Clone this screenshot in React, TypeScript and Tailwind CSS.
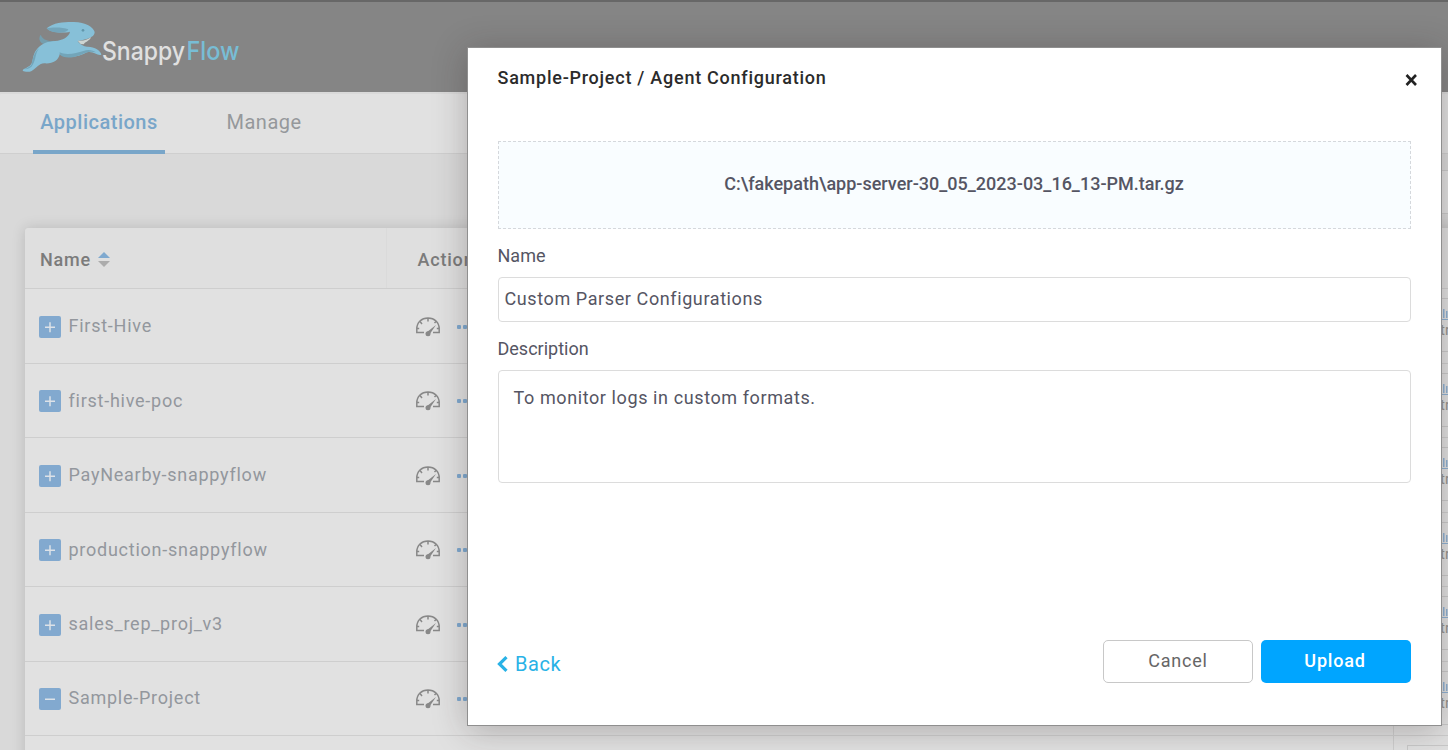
import React from "react";

const projects = [
  { name: "First-Hive", open: false },
  { name: "first-hive-poc", open: false },
  { name: "PayNearby-snappyflow", open: false },
  { name: "production-snappyflow", open: false },
  { name: "sales_rep_proj_v3", open: false },
  { name: "Sample-Project", open: true },
];

function Logo() {
  return (
    <svg width="240" height="60" viewBox="0 0 240 60" role="img" aria-label="SnappyFlow">
      <g transform="translate(-6 -5) scale(.3333)">
        <path d="M84 86C73 80 70 70 77 59C83 74 98 80 118 77L112 90Z" fill="#749eae" />
        <path d="M95 40C115 23 145 21 170 21C210 19 235 36 239 51C239 64 225 72 188 78C194 88 208 95 216 95C237 94 258 107 259 119C248 124 236 107 216 112C195 125 160 133 134 118C131 137 112 147 88 145C72 145 65 160 50 168C42 172 29 171 23 167C24 160 44 158 50 145C55 131 54 115 68 100C82 83 100 80 120 78C143 76 162 66 165 50C145 55 108 54 95 40Z" fill="#87c0d8" />
        <path d="M95 40C115 36 145 37 160 43C158 50 148 52 132 53C115 53 102 49 95 40Z" fill="#74a5ba" />
        <path d="M134 112C155 122 185 114 205 108C222 102 235 107 243 112C225 107 212 112 196 120C170 130 145 131 134 118Z" fill="#73a5b9" />
        <path d="M188 77C205 79 215 75 229 66C224 78 210 80 206 88L197 87Z" fill="#ced5d2" />
        <path d="M50 148C54 128 58 112 72 100C61 115 63 132 54 148C50 158 40 163 28 163C38 158 46 156 50 148Z" fill="#73a5b9" />
        <circle cx="204" cy="46" r="4" fill="#6297ac" />
      </g>
      <text x="81" y="39.800" fontFamily="Inter, sans-serif" fontSize="25.500" fontWeight="500" fill="#e0e0e0" textLength="83" lengthAdjust="spacingAndGlyphs">Snappy</text>
      <text x="165.500" y="39.800" fontFamily="Inter, sans-serif" fontSize="25.500" fontWeight="500" fill="#78bdd5" textLength="53" lengthAdjust="spacingAndGlyphs">Flow</text>
    </svg>
  );
}

function Gauge() {
  return (
    <svg width="24" height="20" viewBox="0 0 24 20" fill="none" stroke="#888" strokeWidth="1.5">
      <path d="M8 15.500H.8V12C.8 5.500 5.500 1 12 1S23.200 5.500 23.200 12V15.500H17M12 1V4.500M4 4.500L6 7M20 4.500L18.500 6M1 11.500H3.200M20.800 11.500H23" />
      <path d="M20 8L11 15L13.500 17.500Z" fill="#888" stroke="none" />
      <circle cx="12" cy="16.700" r="2.500" fill="#888" stroke="none" />
    </svg>
  );
}

function Toggle({ open }: { open: boolean }) {
  return (
    <svg width="22" height="22" viewBox="0 0 22 22" className="shrink-0">
      <rect width="22" height="22" rx="2" fill="#82a9cf" />
      <path d={open ? "M6 11.250H16" : "M6 11.250H16M11 6.250V16.250"} stroke="#dde2e8" strokeWidth="1.500" />
    </svg>
  );
}

function ProjectRow({ name, open }: { name: string; open: boolean }) {
  return (
    <div className="flex h-[74.45px] shrink-0 border-b border-[#cecece]">
      <div className="flex w-[362px] shrink-0 items-center gap-2 pt-[1.4px] pl-[14px]">
        <Toggle open={open} />
        <span className="-ml-[0.5px] pb-0.5 text-[18px] tracking-[0.75px] text-[#93979d]">{name}</span>
      </div>
      <div className="flex w-[1006px] shrink-0 items-center gap-[17px] pt-[1.4px] pl-[29px]">
        <Gauge />
        <div className="flex gap-[2px]">
          <i className="size-1 rounded-[1px] bg-[#7fa9cf]" />
          <i className="size-1 rounded-[1px] bg-[#7fa9cf]" />
          <i className="size-1 rounded-[1px] bg-[#7fa9cf]" />
        </div>
      </div>
      <div className="grow border-l border-[#cecece] pt-[9px] pl-[13px]">
        <div className="h-[54px] w-40 border border-[#c9c9c9] pt-2.5 pl-[26px]">
          <svg width="28" height="11" viewBox="0 0 28 11" fill="#8fb2d4">
            <path d="M7 4h1v5H7zM9 0h1.500v9H9zM12 2h1.500v7h-1.500zM0 10h28v1H0z" />
          </svg>
          <div className="pl-[6px] text-[15px] leading-5 text-[#96938f]">tr</div>
        </div>
      </div>
    </div>
  );
}

export default function App() {
  return (
    <div className="relative h-[750px] w-full overflow-hidden bg-[#d9d9d9] font-['Roboto',sans-serif]">
      <header className="h-[92px] border-t-2 border-[#676767] bg-[#858585] pt-[18px] pl-[21px]">
        <Logo />
      </header>
      <nav className="flex h-[62px] border-b border-[#cfcfcf] bg-[#e1e1e1] pl-[33px] text-[20px] tracking-[0.5px] shadow-[inset_0_2px_1px_#d9d9d9]">
        <div className="flex h-[62px] w-[132px] justify-center border-b-4 border-[#79a6c9] pt-[15px] font-medium text-[#79a6c9]">Applications</div>
        <div className="pt-[15px] pl-[61.5px] text-[#95989b]">Manage</div>
      </nav>
      <div className="flex h-[74px] justify-end pt-4">
        <div className="h-[44px] w-[200px] border-y border-[#c9c9c9] bg-[#e1e1e1]" />
      </div>
      <main className="ml-[25px] flex h-[560px] w-[1540px] flex-col rounded-tl bg-[#e1e1e1] shadow-[0_0_14px_rgba(0,0,0,0.15)]">
        <div className="flex h-[61.4px] shrink-0 items-center rounded-tl border-b border-[#cecece] bg-[#dfdfdf] text-[18px] font-medium tracking-[0.8px] text-[#7b7b7b]">
          <div className="flex h-full w-[362px] items-center gap-[7px] border-r border-[#dadada] pt-[3px] pl-[15px]">
            Name
            <svg width="12" height="15" viewBox="0 0 12 15">
              <path d="M0 6L6 0L12 6Z" fill="#7fa9cf" />
              <path d="M0 9L6 15L12 9Z" fill="#acacac" />
            </svg>
          </div>
          <div className="pt-[3px] pl-[30.500px]">Actions</div>
        </div>
        {projects.map((p) => (
          <ProjectRow key={p.name} {...p} />
        ))}
        <div className="flex grow">
          <div className="w-[1368px] shrink-0" />
          <div className="grow border-l border-[#cecece] pt-[9px] pl-[13px]">
            <div className="h-[54px] w-40 border border-[#c9c9c9]" />
          </div>
        </div>
      </main>

      <section
        role="dialog"
        aria-label="Agent Configuration"
        className="absolute top-[47px] left-[467px] flex h-[679px] w-[975px] flex-col border border-[#8f8f8f] bg-white px-[30px] text-[18px] text-[#555563] shadow-[0_4px_32px_rgba(40,30,30,0.28)]"
      >
        <div className="flex h-[93px] items-start justify-between pt-[16px]">
          <h1 className="-ml-[0.5px] font-medium leading-[27px] tracking-[0.75px] text-[#2b2b2b]">Sample-Project / Agent Configuration</h1>
          <svg width="13" height="12" viewBox="0 0 13 12" className="mt-[10px] mr-[-7px]">
            <path d="M1.500 1L11 11M11 1L1.500 11" stroke="#222" strokeWidth="2.600" />
          </svg>
        </div>
        <div className="flex h-[88px] items-center justify-center border border-dashed border-[#d5d8dc] bg-[#f9fdff] pr-px pb-[3px] font-medium">
          C:\fakepath\app-server-30_05_2023-03_16_13-PM.tar.gz
        </div>
        <div className="mt-[13px] -ml-[0.5px] leading-[27px]">Name</div>
        <div className="mt-[8px] h-[45px] rounded border border-[#dcdcdc] pl-[5.500px] leading-[41px] tracking-[0.6px]">Custom Parser Configurations</div>
        <div className="mt-[13px] -ml-[0.5px] leading-[27px]">Description</div>
        <div className="mt-[8px] h-[113px] rounded border border-[#dcdcdc] pt-[13px] pl-[14.500px] leading-[27px] tracking-[0.6px]">To monitor logs in custom formats.</div>
        <div className="mt-[157px] flex items-start gap-2">
          <div className="mr-auto -ml-px flex items-center gap-[7px] pt-[9px] text-[20px] leading-[30px] tracking-[0.6px] text-[#29b2e6]">
            <svg width="11" height="16" viewBox="0 0 11 16" fill="none" stroke="#29b2e6" strokeWidth="3.200">
              <path d="M9.500 1.200L2.500 8L9.500 14.800" />
            </svg>
            Back
          </div>
          <button className="h-[43px] w-[150px] rounded-[5px] border border-[#c8c8c8] pb-0.5 tracking-[0.8px] text-[#666]">Cancel</button>
          <button className="h-[43px] w-[150px] rounded-[5px] bg-[#00a5ff] pr-[7px] pb-0.5 pl-[5px] font-medium tracking-[0.8px] text-white">Upload</button>
        </div>
      </section>
    </div>
  );
}
